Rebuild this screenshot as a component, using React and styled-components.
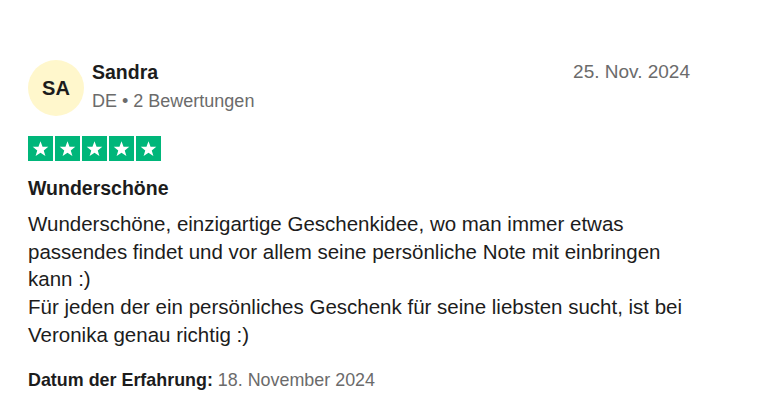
import React from 'react'
import styled, { createGlobalStyle } from 'styled-components'

const Global = createGlobalStyle`
body{
  margin:0;
  background:#fff;
  font-family: "Liberation Sans", Arial, sans-serif;
  color:#1c1c1c;
}
`

const Card = styled.article`
width: 662px;
padding: 60px 0 0 28px;
`

const Header = styled.div`
display:flex;
align-items:flex-start;
`

const Avatar = styled.div`
width:56px;
height:56px;
border-radius:50%;
background:#fff7cc;
display:flex;
align-items:center;
justify-content:center;
font-weight:700;
font-size:20px;
color:#1c1c1c;
flex-shrink:0;
`

const Who = styled.div`
margin-left:8px;
flex:1;
h3{
  margin:0;
  font-size:19.5px;
  line-height:24px;
  font-weight:700;
}
p{
  margin:6px 0 0;
  font-size:18px;
  line-height:22px;
  color:#6b6b6b;
}
`

const Date = styled.time`
font-size:19px;
line-height:24px;
color:#6b6b6b;
`

const Stars = styled.div`
display:flex;
gap:2px;
margin-top:20px;
`

const StarBox = styled.span`
width:25px;
height:25px;
background:#00b67a;
display:flex;
align-items:center;
justify-content:center;
`

const Title = styled.h2`
margin:15px 0 0;
font-size:19.5px;
line-height:24px;
font-weight:700;
`

const Body = styled.p`
margin:10px 0 0;
font-size:20.5px;
line-height:27.7px;
`

const Footer = styled.p`
margin:20px 0 0;
font-size:17.9px;
line-height:22px;
color:#6b6b6b;
b{
  color:#1c1c1c;
}
`

const Star = () => (
  <StarBox>
    <svg width="17" height="17" viewBox="0 0 24 24">
      <path fill="#fff" d="M12 1.8l2.9 7.6 8.1.3-6.4 5 2.3 7.8L12 18l-6.9 4.5 2.3-7.8-6.4-5 8.1-.3z"/>
    </svg>
  </StarBox>
)

export default function App() {
  return (
    <>
      <Global />
      <Card>
        <Header>
          <Avatar>SA</Avatar>
          <Who>
            <h3>Sandra</h3>
            <p>DE • 2 Bewertungen</p>
          </Who>
          <Date>25. Nov. 2024</Date>
        </Header>
        <Stars>
          {[0,1,2,3,4].map(i => <Star key={i} />)}
        </Stars>
        <Title>Wunderschöne</Title>
        <Body>
          Wunderschöne, einzigartige Geschenkidee, wo man immer etwas passendes findet und vor allem seine persönliche Note mit einbringen kann :)
          <br />
          Für jeden der ein persönliches Geschenk für seine liebsten sucht, ist bei Veronika genau richtig :)
        </Body>
        <Footer><b>Datum der Erfahrung:</b> 18. November 2024</Footer>
      </Card>
    </>
  )
}
